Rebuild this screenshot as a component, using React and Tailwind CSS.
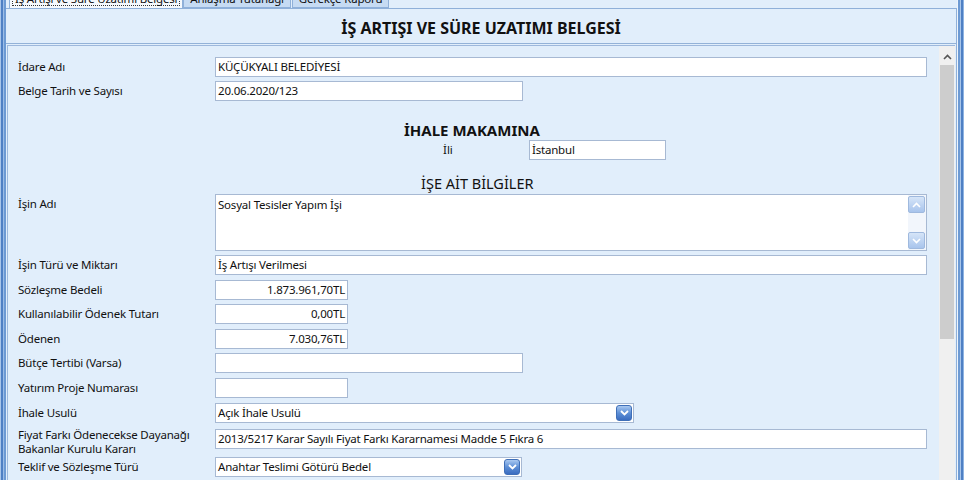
import React from "react";

const font = { fontFamily: '"Noto Sans", "Open Sans", Arial, sans-serif' };

function ComboButton() {
  return (
    <div className="flex h-[16px] w-[16px] items-center justify-center rounded-[3px] border border-[#3f6fb8] bg-gradient-to-b from-[#a9c8f0] via-[#5d8fd6] to-[#3a6cc0]">
      <svg width="9" height="6" viewBox="0 0 9 6">
        <path d="M1 1 L4.5 4.5 L8 1" fill="none" stroke="white" strokeWidth="1.8" />
      </svg>
    </div>
  );
}

function SpinButton({ up }) {
  return (
    <div className="flex h-[17px] w-[17px] items-center justify-center rounded-[2px] border border-[#9fb9de] bg-gradient-to-b from-[#d6e5f8] to-[#a8c4ec]">
      <svg width="9" height="6" viewBox="0 0 9 6">
        <path
          d={up ? "M1 5 L4.5 1.5 L8 5" : "M1 1 L4.5 4.5 L8 1"}
          fill="none"
          stroke="#ffffff"
          strokeWidth="1.6"
        />
      </svg>
    </div>
  );
}

function Input({ value, w, right, combo }) {
  return (
    <div
      className={`flex h-[20px] items-center border border-[#a7b9d3] bg-white ${w}`}
    >
      <span
        className={`flex-1 overflow-hidden whitespace-nowrap px-[2px] text-[11.5px] leading-[16px] tracking-[-0.2px] text-[#111] ${
          right ? "text-right" : ""
        }`}
      >
        {value}
      </span>
      {combo && (
        <div className="pr-[1px]">
          <ComboButton />
        </div>
      )}
    </div>
  );
}

function Row({ label, children, mt = "mt-[4px]", label2 }) {
  return (
    <div className={`flex items-start ${mt}`}>
      <div className="h-[20px] w-[207px] shrink-0 whitespace-nowrap pl-[10px] text-[11.5px] leading-[14px] tracking-[-0.2px] text-[#111]">
        {label2 ? (
          <div className="-mt-[1px]">
            <div>{label}</div>
            <div>{label2}</div>
          </div>
        ) : (
          <div className="pt-[3px]">{label}</div>
        )}
      </div>
      {children}
    </div>
  );
}

export default function App() {
  return (
    <div
      className="flex h-[480px] w-[964px] overflow-hidden bg-[#e1eefb]"
      style={font}
    >
      {/* left window border */}
      <div className="flex h-full w-[6px] shrink-0">
        <div className="w-[1px] bg-[#a9c6ea]" />
        <div className="w-[2px] bg-[#4f80c4]" />
        <div className="w-[1px] bg-[#9dbde6]" />
        <div className="w-[2px] bg-[#6d9ad3]" />
      </div>

      <div className="flex min-w-0 flex-1 flex-col">
        {/* tabs */}
        <div className="flex h-[9px] items-end overflow-visible border-b border-[#8fb0d9]">
          <div className="ml-[3px] flex h-[20px] items-center border border-b-0 border-[#8fb0d9] bg-[#f5f9fd] px-[2px]">
            <span className="whitespace-nowrap border border-dotted border-[#333] px-[2px] text-[11.5px] leading-[13px] tracking-[-0.2px] text-[#111]">
              İş Artışı ve Süre Uzatımı Belgesi
            </span>
          </div>
          <div className="flex h-[19px] items-center whitespace-nowrap border border-[#8fb0d9] bg-[#c6dbf3] px-[6px] text-[11.5px] leading-none tracking-[-0.2px] text-[#111]">
            Anlaşma Tutanağı
          </div>
          <div className="ml-[1px] flex h-[19px] items-center whitespace-nowrap border border-[#8fb0d9] bg-[#c6dbf3] px-[6px] text-[11.5px] leading-none tracking-[-0.2px] text-[#111]">
            Gerekçe Raporu
          </div>
        </div>

        {/* tab page */}
        <div className="flex min-h-0 flex-1 flex-col border-r border-[#8fb0d9] bg-[#e1eefb]">
          <div className="flex h-[35px] items-center justify-center border-b border-[#93b2d8] pt-[4px]">
            <span className="text-[16px] font-bold text-[#111]">
              İŞ ARTIŞI VE SÜRE UZATIMI BELGESİ
            </span>
          </div>

          <div className="mx-[1px] mt-[1px] flex min-h-0 flex-1 border-l border-t border-[#9db8dc]">
            {/* form area */}
            <div className="min-w-0 flex-1 pt-[11px]">
              <Row label="İdare Adı" mt="mt-0">
                <Input value="KÜÇÜKYALI BELEDİYESİ" w="w-[712px]" />
              </Row>
              <Row label="Belge Tarih ve Sayısı">
                <Input value="20.06.2020/123" w="w-[308px]" />
              </Row>

              <div className="mt-[20px] flex flex-col">
                <div className="pl-[396px] text-[15px] font-bold leading-[18px] text-[#111]">
                  İHALE MAKAMINA
                </div>
                <div className="mt-[1px] flex items-center">
                  <div className="w-[521px] pl-[435px] text-[11.5px] text-[#111]">İli</div>
                  <Input value="İstanbul" w="w-[137px]" />
                </div>
                <div className="mt-[14px] pl-[413px] text-[14.5px] leading-[18px] text-[#111]">
                  İŞE AİT BİLGİLER
                </div>
              </div>

              <Row label="İşin Adı" mt="mt-[2px]">
                <div className="flex h-[57px] w-[712px] border border-[#a7b9d3] bg-white">
                  <span className="flex-1 px-[2px] pt-[3px] text-[11.5px] leading-[14px] tracking-[-0.2px] text-[#111]">
                    Sosyal Tesisler Yapım İşi
                  </span>
                  <div className="flex flex-col justify-between bg-[#f2f6fc] py-[1px] pr-[1px]">
                    <SpinButton up />
                    <SpinButton />
                  </div>
                </div>
              </Row>
              <Row label="İşin Türü ve Miktarı" mt="mt-[4px]">
                <Input value="İş Artışı Verilmesi" w="w-[712px]" />
              </Row>
              <Row label="Sözleşme Bedeli" mt="mt-[5px]">
                <Input value="1.873.961,70TL" w="w-[133px]" right />
              </Row>
              <Row label="Kullanılabilir Ödenek Tutarı" mt="mt-[4px]">
                <Input value="0,00TL" w="w-[133px]" right />
              </Row>
              <Row label="Ödenen" mt="mt-[5px]">
                <Input value="7.030,76TL" w="w-[133px]" right />
              </Row>
              <Row label="Bütçe Tertibi (Varsa)" mt="mt-[4px]">
                <Input value="" w="w-[308px]" />
              </Row>
              <Row label="Yatırım Proje Numarası" mt="mt-[5px]">
                <Input value="" w="w-[133px]" />
              </Row>
              <Row label="İhale Usulü" mt="mt-[5px]">
                <Input value="Açık İhale Usulü" w="w-[419px]" combo />
              </Row>
              <Row
                label="Fiyat Farkı Ödenecekse Dayanağı"
                label2="Bakanlar Kurulu Kararı"
                mt="mt-[6px]"
              >
                <Input
                  value="2013/5217 Karar Sayılı Fiyat Farkı Kararnamesi Madde 5 Fıkra 6"
                  w="w-[712px]"
                />
              </Row>
              <Row label="Teklif ve Sözleşme Türü" mt="mt-[8px]">
                <Input value="Anahtar Teslimi Götürü Bedel" w="w-[307px]" combo />
              </Row>
            </div>

            {/* vertical scrollbar */}
            <div className="flex w-[16px] shrink-0 flex-col bg-[#f0f0f0] pt-[2px]">
              <div className="flex h-[17px] items-center justify-center">
                <svg width="9" height="6" viewBox="0 0 9 6">
                  <path d="M1 5 L4.5 1.5 L8 5" fill="none" stroke="#555" strokeWidth="1.6" />
                </svg>
              </div>
              <div className="mx-[1px] h-[274px] bg-[#cdcdcd]" />
            </div>
          </div>
        </div>
      </div>

      {/* right window border */}
      <div className="flex h-full w-[7px] shrink-0">
        <div className="w-[1px] bg-[#eef4fb]" />
        <div className="w-[2px] bg-[#6d9ad3]" />
        <div className="w-[1px] bg-[#a9c6ea]" />
        <div className="w-[2px] bg-[#4f80c4]" />
        <div className="w-[1px] bg-[#8fb4e2]" />
      </div>
    </div>
  );
}
